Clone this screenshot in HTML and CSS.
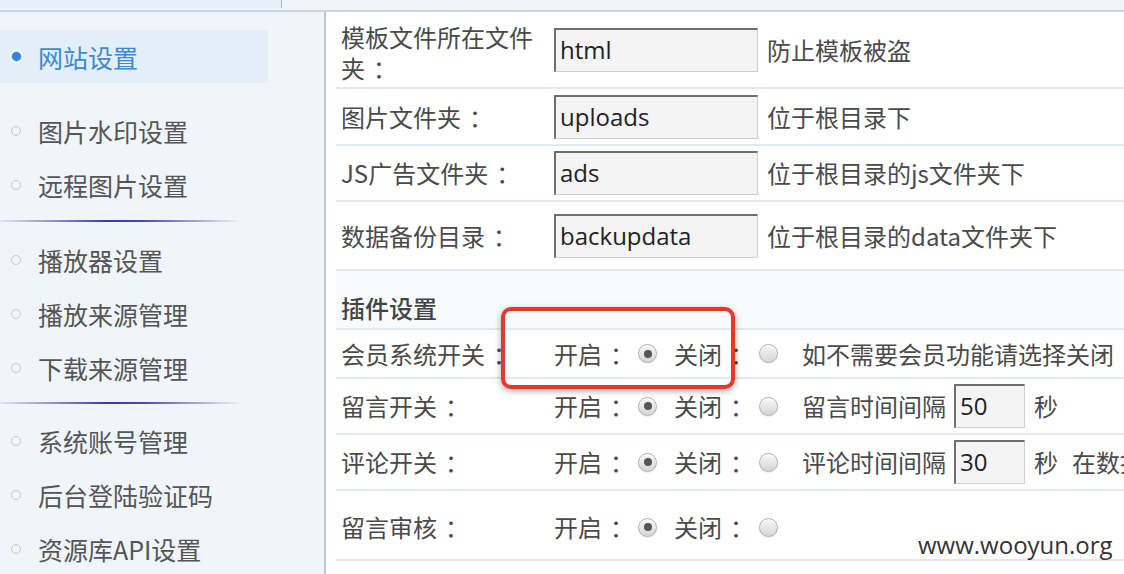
FILE: index.html
```html
<!DOCTYPE html>
<html lang="zh">
<head>
<meta charset="utf-8">
<title>网站设置</title>
<link rel="stylesheet" href="styles.css">
</head>
<body>
<div class="topstrip"><div class="ts-left"></div><div class="ts-right"></div></div>
<div class="layout">
  <aside class="sidebar">
    <div class="nav-item active"><span class="dot"></span>网站设置</div>
    <div class="nav-item"><span class="dot"></span>图片水印设置</div>
    <div class="nav-item"><span class="dot"></span>远程图片设置</div>
    <div class="sep"></div>
    <div class="nav-item"><span class="dot"></span>播放器设置</div>
    <div class="nav-item"><span class="dot"></span>播放来源管理</div>
    <div class="nav-item"><span class="dot"></span>下载来源管理</div>
    <div class="sep sep2"></div>
    <div class="nav-item"><span class="dot"></span>系统账号管理</div>
    <div class="nav-item"><span class="dot"></span>后台登陆验证码</div>
    <div class="nav-item"><span class="dot"></span>资源库API设置</div>
  </aside>
  <main class="main">
    <div class="row h75">
      <div class="label label-wrap">模板文件所在文件夹<span class="c">：</span></div>
      <div class="value"><span class="input wide">html</span><span class="note">防止模板被盗</span></div>
    </div>
    <div class="row h55">
      <div class="label">图片文件夹<span class="c">：</span></div>
      <div class="value"><span class="input wide">uploads</span><span class="note">位于根目录下</span></div>
    </div>
    <div class="row h54">
      <div class="label">JS广告文件夹<span class="c">：</span></div>
      <div class="value"><span class="input wide">ads</span><span class="note">位于根目录的js文件夹下</span></div>
    </div>
    <div class="row h67">
      <div class="label">数据备份目录<span class="c">：</span></div>
      <div class="value"><span class="input wide">backupdata</span><span class="note">位于根目录的data文件夹下</span></div>
    </div>
    <div class="row header">
      <div class="label head-text">插件设置</div>
    </div>
    <div class="row h47">
      <div class="label">会员系统开关<span class="c">：</span></div>
      <div class="value">开启<span class="c">：</span><span class="radio checked"></span><span class="off">关闭<span class="c">：</span></span><span class="radio"></span><span class="tip">如不需要会员功能请选择关闭</span></div>
    </div>
    <div class="row h54">
      <div class="label">留言开关<span class="c">：</span></div>
      <div class="value">开启<span class="c">：</span><span class="radio checked"></span><span class="off">关闭<span class="c">：</span></span><span class="radio"></span><span class="tip">留言时间间隔</span><span class="input small">50</span><span class="sec">秒</span></div>
    </div>
    <div class="row h54">
      <div class="label">评论开关<span class="c">：</span></div>
      <div class="value">开启<span class="c">：</span><span class="radio checked"></span><span class="off">关闭<span class="c">：</span></span><span class="radio"></span><span class="tip">评论时间间隔</span><span class="input small">30</span><span class="sec">秒</span><span class="extra">在数据库中保存</span></div>
    </div>
    <div class="row h68 last">
      <div class="label">留言审核<span class="c">：</span></div>
      <div class="value">开启<span class="c">：</span><span class="radio checked"></span><span class="off">关闭<span class="c">：</span></span><span class="radio"></span></div>
    </div>
    <div class="highlight"></div>
    <div class="watermark">www.wooyun.org</div>
  </main>
</div>
</body>
</html>
```
FILE: styles.css
```css
html, body {
  margin: 0;
  padding: 0;
  width: 1124px;
  height: 574px;
  overflow: hidden;
  background: #fff;
  font-family: "Open Sans", "Noto Sans CJK SC", sans-serif;
  color: #4a4a4a;
}

.c {
  padding-left: 8px;
  margin-right: -8px;
}

.topstrip {
  height: 10px;
  display: flex;
  border-bottom: 2px solid #c6d5df;
  background: #eef5fa;
}
.ts-left {
  width: 281px;
  height: 8px;
  background: #e6f0f8;
  border-right: 1px solid #aab5bd;
}
.ts-right { flex: 1; }

.layout {
  display: flex;
  height: 562px;
}

.sidebar {
  width: 326px;
  flex: none;
  border-right: 2px solid #b9cad6;
  background: #eff5fa;
  padding-top: 18px;
  box-sizing: border-box;
}

.nav-item {
  height: 54px;
  display: flex;
  align-items: center;
  font-family: "Noto Sans CJK SC", sans-serif;
  font-size: 25px;
  color: #555;
  padding-left: 11px;
  white-space: nowrap;
}
.nav-item .dot {
  width: 8px;
  height: 8px;
  border-radius: 50%;
  border: 1px solid #c9c9c9;
  background: #f4f4f4;
  margin-right: 17px;
  flex: none;
}
.nav-item.active {
  height: 53px;
  width: 268px;
  box-sizing: border-box;
  background: #e2eef8;
  color: #3c8ad0;
  margin-bottom: 21px;
}
.nav-item.active .dot {
  background: #2e86d6;
  border-color: #cfe3f4;
  width: 9px;
  height: 9px;
  margin-right: 16px;
  box-shadow: 0 0 0 1px #fff;
}

.sep {
  width: 240px;
  height: 2px;
  margin: 8px 0 11px;
  background: linear-gradient(to right, #dde4f5 0%, #3a3aa8 45%, #4a4ab0 60%, #eef3fa 100%);
}
.sep2 {
  margin: 7px 0 10px;
}

.main {
  flex: 1;
  position: relative;
  padding-left: 10px;
  overflow: hidden;
  background: #fff;
}

.row {
  display: flex;
  align-items: center;
  border-bottom: 2px solid #dfe9ef;
  font-size: 24px;
  white-space: nowrap;
}
.h75 { height: 75px; }
.h55 { height: 55px; }
.h54 { height: 54px; }
.h67 { height: 67px; }
.h47 { height: 47px; }
.h68 { height: 68px; }

.row.header {
  height: 57px;
  align-items: flex-end;
  background: #f8fafc;
}
.row.last {
  align-items: flex-start;
}
.row.last .label, .row.last .value {
  padding-top: 21px;
}

.label {
  width: 218px;
  padding-left: 5px;
  box-sizing: border-box;
  flex: none;
  font-family: "Noto Sans CJK SC", sans-serif;
  line-height: 30px;
  color: #4a4a4a;
}
.label-wrap {
  white-space: normal;
  width: 210px;
  margin-right: 8px;
  line-height: 31px;
  padding-top: 4px;
}
.head-text {
  font-weight: 500;
  color: #444;
  padding-bottom: 5px;
}

.value {
  display: flex;
  align-items: center;
  font-family: "Noto Sans CJK SC", sans-serif;
  line-height: 30px;
  color: #4a4a4a;
}

.input {
  display: block;
  box-sizing: border-box;
  height: 44px;
  background: #f4f4f4;
  border-top: 2px solid #6f6f6f;
  border-left: 2px solid #6f6f6f;
  border-right: 1px solid #cfcfcf;
  border-bottom: 1px solid #cfcfcf;
  font-family: "Open Sans", "Noto Sans CJK SC", sans-serif;
  font-size: 24px;
  line-height: 40px;
  color: #222;
  padding-left: 4px;
}
.input.wide { width: 204px; }
.input.small { width: 71px; margin-left: 8px; }

.note { margin-left: 9px; }

.radio {
  width: 19px;
  height: 19px;
  box-sizing: border-box;
  border-radius: 50%;
  border: 1px solid #b0b0b0;
  background: linear-gradient(#f7f7f7, #d6d6d6);
  box-shadow: inset 0 1px 1px rgba(255,255,255,.8), 0 1px 1px rgba(0,0,0,.08);
  margin-left: 12px;
  flex: none;
  position: relative;
}
.radio.checked::after {
  content: "";
  position: absolute;
  left: 4.5px;
  top: 4.5px;
  width: 8px;
  height: 8px;
  border-radius: 50%;
  background: #555;
}
.off { margin-left: 17px; display: flex; }
.off + .radio { margin-left: 13px; }
.tip { margin-left: 24px; }
.sec { margin-left: 9px; }
.extra { margin-left: 14px; }

.highlight {
  position: absolute;
  left: 175px;
  top: 295px;
  width: 234px;
  height: 82px;
  box-sizing: border-box;
  border: 4px solid #e6392e;
  border-radius: 10px;
  box-shadow: 0 2px 6px rgba(0,0,0,.35);
}

.watermark {
  position: absolute;
  left: 592px;
  top: 516px;
  font-family: "Open Sans", sans-serif;
  font-size: 24px;
  color: #333;
}
```
